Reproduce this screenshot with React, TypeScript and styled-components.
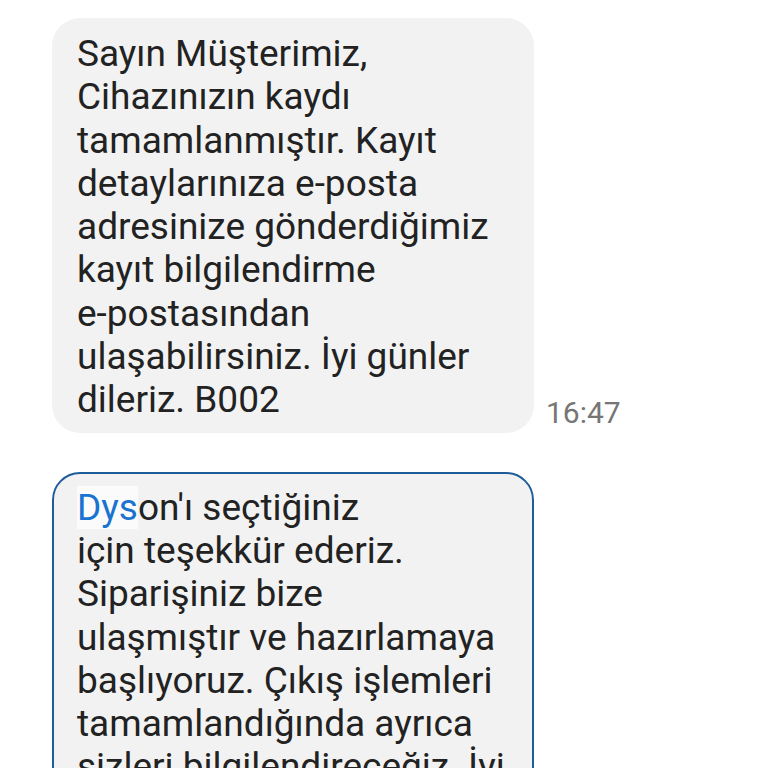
import styled, { createGlobalStyle } from "styled-components";

const GlobalStyle = createGlobalStyle`
  html, body {
    margin: 0;
    padding: 0;
    background: #ffffff;
    overflow: hidden;
  }
  body {
    font-family: Roboto, "Noto Sans", sans-serif;
  }
`;

const Thread = styled.div`
  display: flex;
  flex-direction: column;
  gap: 39px;
  padding: 18px 0 0 52px;
  height: 768px;
  box-sizing: border-box;
`;

const Row = styled.div`
  display: flex;
  align-items: flex-end;
  gap: 12px;
`;

const Bubble = styled.div<{ $outlined?: boolean }>`
  width: 482px;
  box-sizing: border-box;
  background: #f2f2f2;
  border-radius: 28px;
  padding: 14px 16px 11px 25px;
  color: #222222;
  font-size: 37px;
  line-height: 43.3px;
  white-space: nowrap;
  border: ${(p) => (p.$outlined ? "2px solid #1f5d9a" : "none")};
  padding-left: ${(p) => (p.$outlined ? "23px" : "25px")};
  padding-top: ${(p) => (p.$outlined ? "12px" : "14px")};
`;

const Time = styled.span`
  font-size: 30px;
  color: #767676;
  padding-bottom: 3px;
`;

const Link = styled.span`
  color: #1a73d0;
  background: #fbfbfb;
`;

export default function App() {
  return (
    <>
      <GlobalStyle />
      <Thread>
        <Row>
          <Bubble>
            Sayın Müşterimiz,
            <br />
            Cihazınızın kaydı
            <br />
            tamamlanmıştır. Kayıt
            <br />
            detaylarınıza e-posta
            <br />
            adresinize gönderdiğimiz
            <br />
            kayıt bilgilendirme
            <br />
            e-postasından
            <br />
            ulaşabilirsiniz. İyi günler
            <br />
            dileriz. B002
          </Bubble>
          <Time>16:47</Time>
        </Row>
        <Row>
          <Bubble $outlined>
            <Link>Dys</Link>on'ı seçtiğiniz
            <br />
            için teşekkür ederiz.
            <br />
            Siparişiniz bize
            <br />
            ulaşmıştır ve hazırlamaya
            <br />
            başlıyoruz. Çıkış işlemleri
            <br />
            tamamlandığında ayrıca
            <br />
            sizleri bilgilendireceğiz. İyi
            <br />
            günler dileriz.
          </Bubble>
        </Row>
      </Thread>
    </>
  );
}
